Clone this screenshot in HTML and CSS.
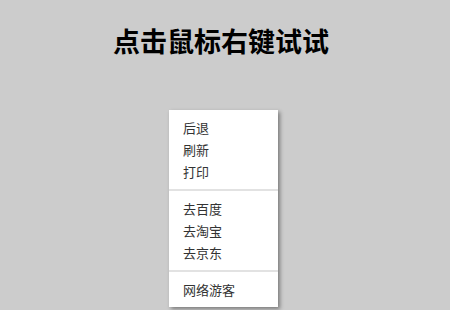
FILE: index.html
```html
<!DOCTYPE html>
<html lang="zh-CN">
<head>
<meta charset="utf-8">
<title>右键菜单</title>
<link rel="stylesheet" href="styles.css">
</head>
<body>
<h1 class="title">点击鼠标右键试试</h1>
<div class="menu">
  <ul class="group">
    <li class="item">后退</li>
    <li class="item">刷新</li>
    <li class="item">打印</li>
  </ul>
  <ul class="group">
    <li class="item">去百度</li>
    <li class="item">去淘宝</li>
    <li class="item">去京东</li>
  </ul>
  <ul class="group">
    <li class="item">网络游客</li>
  </ul>
</div>
</body>
</html>
```
FILE: styles.css
```css
html, body {
  margin: 0;
  padding: 0;
  height: 100%;
}
body {
  background: #cccccc;
  font-family: "Noto Sans CJK SC", "Noto Sans", sans-serif;
  color: #222;
  position: relative;
  overflow: hidden;
}
.title {
  margin: 0;
  padding: 24px 8px 0 0;
  text-align: center;
  font-size: 27px;
  line-height: 34px;
  font-weight: 700;
  color: #000;
}
.menu {
  position: absolute;
  left: 169px;
  top: 110px;
  width: 109px;
  background: #fff;
  box-shadow: 2px 2px 4px rgba(0, 0, 0, 0.4);
}
.group {
  list-style: none;
  margin: 0;
  padding: 7px 0 6px;
  border-top: 2px solid #e2e2e2;
}
.group:first-child {
  border-top: none;
}
.item {
  padding-left: 14px;
  font-size: 13px;
  line-height: 22px;
  color: #333;
}
```
